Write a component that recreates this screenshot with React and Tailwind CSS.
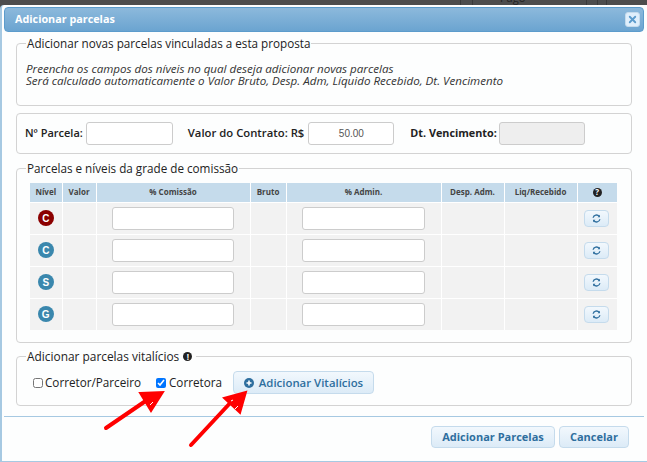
import { LuX } from 'react-icons/lu';

const ROWS = [
  { letter: 'C', color: 'bg-[#8b0000]' },
  { letter: 'C', color: 'bg-[#3a87ad]' },
  { letter: 'S', color: 'bg-[#3a87ad]' },
  { letter: 'G', color: 'bg-[#3a87ad]' },
];

const HEADERS = [
  { label: 'Nível', width: 'w-[32px]' },
  { label: 'Valor', width: 'w-[34px]' },
  { label: '% Comissão', width: 'w-[154px]' },
  { label: 'Bruto', width: 'w-[36px]' },
  { label: '% Admin.', width: 'w-[155px]' },
  { label: 'Desp. Adm.', width: 'w-[63px]' },
  { label: 'Liq/Recebido', width: 'w-[73px]' },
];

const fieldInput = 'h-[23px] border border-[#cccccc] rounded-[3px] bg-white';
const blueButton = 'border border-[#c5dbec] rounded-[4px] bg-gradient-to-b from-[#f2f8fd] to-[#dcebf7] text-[#2e6e9e] font-bold';

function RefreshIcon() {
  return (
    <svg width="9" height="9" viewBox="0 0 12 12" fill="none" stroke="#2e6e9e" strokeWidth="1.8">
      <path d="M1.5 5A4.5 4.5 0 0 1 9.6 3.2" />
      <path d="M10.5 7A4.5 4.5 0 0 1 2.4 8.8" />
      <path d="M10.6 1v3.2H7.4z" fill="#2e6e9e" stroke="none" />
      <path d="M1.4 11V7.8h3.2z" fill="#2e6e9e" stroke="none" />
    </svg>
  );
}

function Arrow({ className, x1, y1, x2, y2, tip, speck }) {
  return (
    <svg className={className} width="647" height="462" viewBox="0 0 647 462" fill="none">
      <line x1={x1} y1={y1} x2={x2} y2={y2} stroke="#ff0000" strokeWidth="4" strokeLinecap="round" />
      <polygon points={tip} fill="#ff0000" stroke="#ff0000" strokeWidth="2" />
      <path d={speck} stroke="#ffffff" strokeWidth="1" />
    </svg>
  );
}

export default function App() {
  return (
    <div className="relative w-[647px] h-[462px] overflow-hidden bg-[#4d4d4d] pt-[5px] font-['Open_Sans',sans-serif] text-[11.7px] text-[#222222]">
      {/* Page behind the dialog, only its last pixels show */}
      <span className="absolute top-[-9px] left-[500px] text-[#222222] text-[11px] leading-[14px]">Pago</span>
      <span className="absolute top-0 left-[460px] w-px h-[5px] bg-[#3a3a3a]" />
      <span className="absolute top-0 left-[472px] w-px h-[5px] bg-[#3a3a3a]" />
      <span className="absolute top-0 left-[586px] w-px h-[5px] bg-[#3a3a3a]" />
      <span className="absolute top-0 left-[597px] w-px h-[5px] bg-[#3a3a3a]" />
      <span className="absolute top-0 left-[606px] w-px h-[5px] bg-[#3a3a3a]" />

      <div className="h-[457px] bg-[#fdfefe] border-l-2 border-b border-[#a6c9e2] rounded-tl-[4px] pt-[2px] pr-[3px] pl-[2px]">
        {/* Title bar */}
        <div className="h-[25px] flex items-center justify-between pl-[10px] pr-[3px] rounded-[4px] border border-[#5c9ccc] bg-gradient-to-b from-[#8cb9dc] to-[#6ba4d0]">
          <span className="text-white font-bold text-[10.8px]">Adicionar parcelas</span>
          <span className="w-[15px] h-[15px] rounded-[3px] bg-[#dfeffc] border border-[#c5dbec] flex items-center justify-center text-[#5c9ccc]">
            <LuX size={11} strokeWidth={4} />
          </span>
        </div>

        <div className="pl-[12px] pr-[12px]">
          {/* Intro */}
          <fieldset className="mt-[4px] h-[70px] border border-[#d3d3d3] rounded-[4px] pl-[9px]">
            <legend className="px-[1px] leading-[15px]">Adicionar novas parcelas vinculadas a esta proposta</legend>
            <p className="mt-[12px] italic text-[11.6px] leading-[12px] text-[#333333]">
              Preencha os campos dos níveis no qual deseja adicionar novas parcelas<br />
              Será calculado automaticamente o Valor Bruto, Desp. Adm, Líquido Recebido, Dt. Vencimento
            </p>
          </fieldset>

          {/* Contract fields */}
          <div className="mt-[7px] h-[41px] border border-[#d3d3d3] rounded-[4px] flex items-center pl-[8px] font-semibold text-[11px]">
            <span>Nº Parcela:</span>
            <span className={`${fieldInput} w-[87px] ml-[3px]`} />
            <span className="ml-[15px] text-[11.3px]">Valor do Contrato: R$</span>
            <span className={`${fieldInput} w-[86px] ml-[4px] flex items-center justify-center font-['Liberation_Sans',sans-serif] font-normal text-[10px] text-[#555555]`}>50.00</span>
            <span className="ml-[16px] font-bold text-[10.8px]">Dt. Vencimento:</span>
            <span className="w-[86px] h-[23px] ml-[2px] border border-[#cccccc] rounded-[3px] bg-[#eeeeee]" />
          </div>

          {/* Levels grid */}
          <fieldset className="mt-[7px] h-[182px] border border-[#d3d3d3] rounded-[4px] pl-[13px]">
            <legend className="ml-[-4px] px-[1px] leading-[15px]">Parcelas e níveis da grade de comissão</legend>
            <table className="mt-[7px] w-[587px] table-fixed border-collapse text-[8px]">
              <thead>
                <tr className="h-[19px] bg-[#c5dbeb]">
                  {HEADERS.map(({ label, width }) => (
                    <th key={label} className={`${width} border-r border-white font-bold text-[#444444] text-center p-0`}>{label}</th>
                  ))}
                  <th className="text-center p-0 text-[#222222]">
                    <span className="inline-flex w-[9px] h-[9px] rounded-full bg-[#222222] text-white text-[8px] leading-none items-center justify-center">?</span>
                  </th>
                </tr>
              </thead>
              <tbody>
                {ROWS.map(({ letter, color }, i) => (
                  <tr key={i} className="h-[32px] bg-[#f2f2f2] border-t border-white">
                    <td className="border-r border-white p-0 text-center">
                      <span className={`inline-flex w-[16px] h-[16px] rounded-full ${color} text-white font-bold text-[10px] items-center justify-center font-['Liberation_Sans',sans-serif]`}>{letter}</span>
                    </td>
                    <td className="border-r border-white p-0" />
                    <td className="border-r border-white p-0">
                      <div className={`${fieldInput} w-[122px] ml-[15px]`} />
                    </td>
                    <td className="border-r border-white p-0" />
                    <td className="border-r border-white p-0">
                      <div className={`${fieldInput} w-[123px] ml-[15px]`} />
                    </td>
                    <td className="border-r border-white p-0" />
                    <td className="border-r border-white p-0" />
                    <td className="p-0">
                      <button className={`${blueButton} w-[25px] h-[17px] ml-[6px] flex items-center justify-center`}>
                        <RefreshIcon />
                      </button>
                    </td>
                  </tr>
                ))}
              </tbody>
            </table>
          </fieldset>

          {/* Lifetime installments */}
          <fieldset className="mt-[6px] h-[57px] border border-[#d3d3d3] rounded-[4px] pl-[16px]">
            <legend className="ml-[-7px] px-[1px] leading-[15px] text-[11.9px] flex items-center gap-[4px] pr-[4px]">
              Adicionar parcelas vitalícios
              <span className="inline-flex w-[9px] h-[9px] rounded-full bg-[#222222] text-white text-[8px] font-bold leading-none items-center justify-center">!</span>
            </legend>
            <div className="flex items-center mt-[7px]">
              <input type="checkbox" readOnly className="w-[10px] h-[10px] m-0" />
              <span className="ml-[2px]">Corretor/Parceiro</span>
              <input type="checkbox" checked readOnly className="w-[10px] h-[10px] ml-[15px] accent-[#0075ff]" />
              <span className="ml-[3px]">Corretora</span>
              <button className={`${blueButton} ml-[11px] w-[141px] h-[23px] flex items-center justify-center gap-[5px] text-[11.4px] font-semibold`}>
                <svg width="10" height="10" viewBox="0 0 10 10">
                  <circle cx="5" cy="5" r="5" fill="#2e6e9e" />
                  <path d="M5 2.5v5M2.5 5h5" stroke="#ffffff" strokeWidth="1.6" />
                </svg>
                Adicionar Vitalícios
              </button>
            </div>
          </fieldset>
        </div>

        {/* Footer */}
        <div className="mt-[10px] border-t border-[#a6c9e2] flex justify-end gap-[4px] pt-[9px] pr-[15px]">
          <button className={`${blueButton} w-[124px] h-[22px] text-[11px]`}>Adicionar Parcelas</button>
          <button className={`${blueButton} w-[70px] h-[22px] text-[11px]`}>Cancelar</button>
        </div>
      </div>

      {/* Red annotation arrows */}
      <Arrow className="absolute inset-0" x1={106} y1={428} x2={150} y2={398} tip="140,393 163,392 151,411" speck="M150 405l3-3" />
      <Arrow className="absolute inset-0" x1={191} y1={445} x2={232} y2={401} tip="224,398 246,392 240,413" speck="M235 409l3-3M231 401l2-1" />
    </div>
  );
}
